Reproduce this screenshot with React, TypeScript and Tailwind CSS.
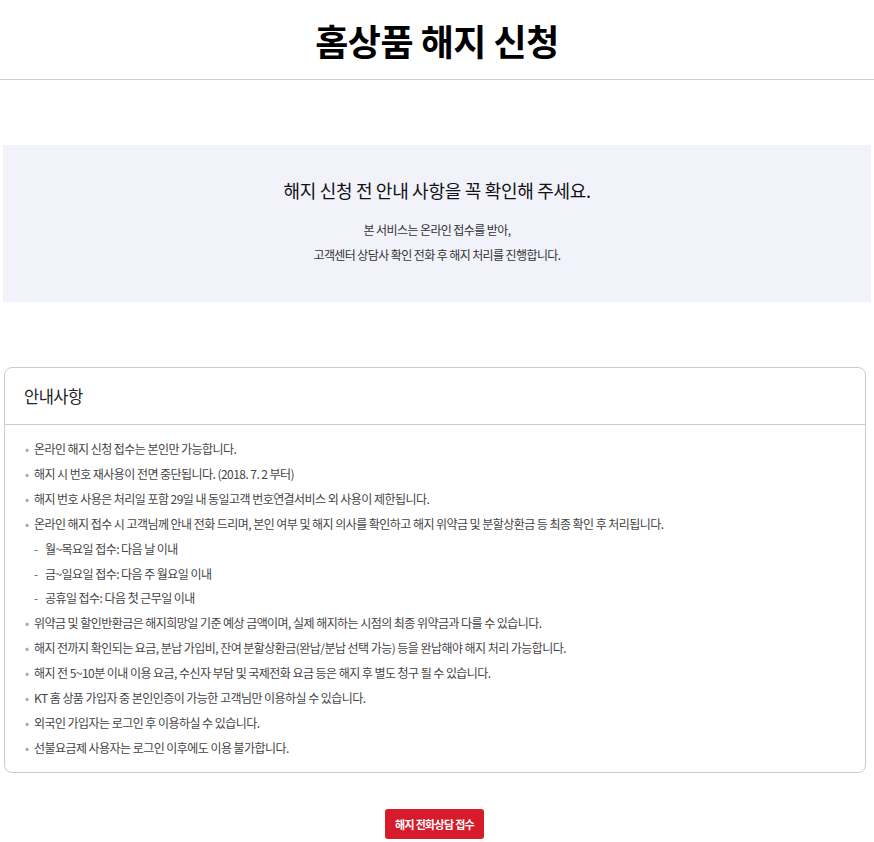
const font = "[font-family:'Noto_Sans_CJK_KR','Noto_Sans',sans-serif]";

const notices: { text: string; sub?: boolean }[] = [
  { text: "온라인 해지 신청 접수는 본인만 가능합니다." },
  { text: "해지 시 번호 재사용이 전면 중단됩니다. (2018. 7. 2 부터)" },
  { text: "해지 번호 사용은 처리일 포함 29일 내 동일고객 번호연결서비스 외 사용이 제한됩니다." },
  {
    text: "온라인 해지 접수 시 고객님께 안내 전화 드리며, 본인 여부 및 해지 의사를 확인하고 해지 위약금 및 분할상환금 등 최종 확인 후 처리됩니다.",
  },
  { text: "월~목요일 접수: 다음 날 이내", sub: true },
  { text: "금~일요일 접수: 다음 주 월요일 이내", sub: true },
  { text: "공휴일 접수: 다음 첫 근무일 이내", sub: true },
  { text: "위약금 및 할인반환금은 해지희망일 기준 예상 금액이며, 실제 해지하는 시점의 최종 위약금과 다를 수 있습니다." },
  { text: "해지 전까지 확인되는 요금, 분납 가입비, 잔여 분할상환금(완납/분납 선택 가능) 등을 완납해야 해지 처리 가능합니다." },
  { text: "해지 전 5~10분 이내 이용 요금, 수신자 부담 및 국제전화 요금 등은 해지 후 별도 청구 될 수 있습니다." },
  { text: "KT 홈 상품 가입자 중 본인인증이 가능한 고객님만 이용하실 수 있습니다." },
  { text: "외국인 가입자는 로그인 후 이용하실 수 있습니다." },
  { text: "선불요금제 사용자는 로그인 이후에도 이용 불가합니다." },
];

export default function App() {
  return (
    <div className={`${font} min-h-[842px] bg-white text-[#222]`}>
      <header className="flex h-[80px] items-center justify-center border-b border-[#cfcfcf]">
        <h1 className="text-[36px] font-bold leading-none tracking-[-0.5px] text-black">홈상품 해지 신청</h1>
      </header>

      <div className="px-[3px] pt-[65px]">
        <section className="flex h-[157px] flex-col items-center justify-center bg-[#f1f2fa]">
          <h2 className="text-[18px] leading-none tracking-[-0.3px] text-[#111]">
            해지 신청 전 안내 사항을 꼭 확인해 주세요.
          </h2>
          <p className="mt-[18px] text-center text-[12px] leading-[25px] tracking-[-0.6px] text-[#333]">
            본 서비스는 온라인 접수를 받아,
            <br />
            고객센터 상담사 확인 전화 후 해지 처리를 진행합니다.
          </p>
        </section>

        <section className="ml-[1px] mr-[5px] mt-[65px] rounded-[8px] border border-[#cccccc]">
          <div className="flex h-[57px] items-center border-b border-[#cccccc] px-[19px]">
            <h3 className="text-[16.5px] tracking-[-0.5px] text-[#222]">안내사항</h3>
          </div>
          <ul className="px-[20px] py-[12px]">
            {notices.map((n) => (
              <li
                key={n.text}
                className={`flex h-[24.85px] items-center text-[12px] tracking-[-0.55px] text-[#444] ${
                  n.sub ? "pl-[9px]" : ""
                }`}
              >
                <span className={`${n.sub ? "w-[11px] text-[#666]" : "w-[9px] text-[#aaa]"} shrink-0`}>
                  {n.sub ? "-" : "•"}
                </span>
                <span>{n.text}</span>
              </li>
            ))}
          </ul>
        </section>

        <div className="flex justify-center pr-[5px] pt-[36px]">
          <button className="h-[30px] rounded-[3px] bg-[#d81b2a] px-[10px] text-[11px] font-bold tracking-[-0.7px] text-white">
            해지 전화상담 접수
          </button>
        </div>
      </div>
    </div>
  );
}
